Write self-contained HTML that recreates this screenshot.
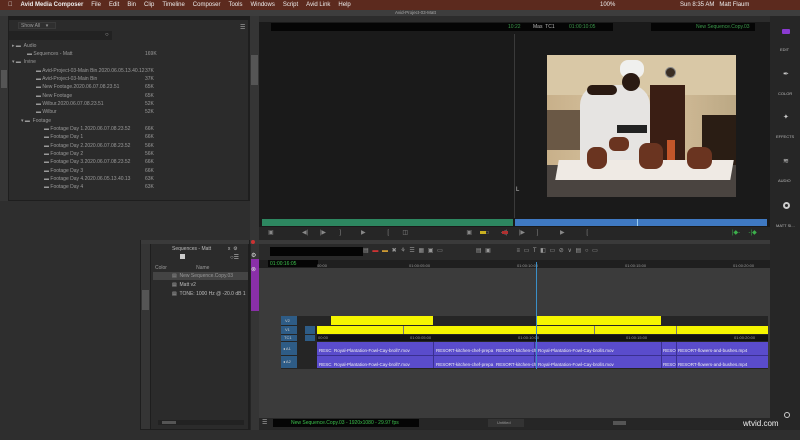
<!DOCTYPE html>
<html><head><meta charset="utf-8"><style>
*{margin:0;padding:0;box-sizing:border-box}
body{width:800px;height:440px;overflow:hidden;background:#2e2e2e;font-family:"Liberation Sans",sans-serif;position:relative;color:#aaa}
.a{position:absolute}
.t{position:absolute;font-size:5px;white-space:nowrap;color:#9a9a9a}
.menu span{margin-right:8px}
</style></head><body>
<!-- menubar -->
<div class="a menu" style="left:0;top:0;width:800px;height:10px;background:#5c2a1e;color:#eee;font-size:6px;line-height:10px;padding-left:8px;white-space:nowrap">
<span style="font-weight:bold">&#63743;</span><span style="font-weight:bold">Avid Media Composer</span><span>File</span><span>Edit</span><span>Bin</span><span>Clip</span><span>Timeline</span><span>Composer</span><span>Tools</span><span>Windows</span><span>Script</span><span>Avid Link</span><span>Help</span>
<span class="a" style="left:680px;top:0">Sun 8:35 AM &nbsp; Matt Flaum</span>
<span class="a" style="left:600px;top:0">100%</span>
</div>
<div class="a" style="left:0;top:10px;width:800px;height:6px;background:#3d3d3d"></div>
<div class="t" style="left:395px;top:10px;font-size:4.5px;color:#aaa">Avid-Project-03-Matt</div>

<!-- bin panel -->
<div class="a" style="left:0;top:16px;width:250px;height:185px;background:#1e1e1e"></div>
<div class="a" style="left:0;top:16px;width:8px;height:185px;background:#353535"></div>
<div class="a" style="left:1px;top:70px;width:6px;height:18px;background:#555"></div>
<div class="a" style="left:9px;top:20px;width:239px;height:180px;background:#2b2b2b"></div>
<div class="a" style="left:18px;top:22px;width:38px;height:7px;background:#2f2f2f;border:1px solid #3a3a3a"></div>
<div class="t" style="left:21px;top:23px">Show All &nbsp; &nbsp;&#9662;</div>
<div class="a" style="left:9px;top:31px;width:103px;height:9px;background:#222"></div>
<div class="t" style="left:105px;top:32px;font-size:6px;color:#aaa">&#9675;</div>
<div class="t" style="left:240px;top:24px;font-size:6px;color:#aaa">&#9776;</div>
<div style="position:absolute;left:9px;top:43px;width:239px">
<div class="t" style="left:3px;top:0">&#9656; &#9644; &nbsp;Audio</div>
<div class="t" style="left:18px;top:8px">&#9644; Sequences - Matt</div><div class="t" style="left:136px;top:8px">169K</div>
<div class="t" style="left:3px;top:16px">&#9662; &#9644; &nbsp;Irvine</div>
<div class="t" style="left:27px;top:25px">&#9644; Avid-Project-03-Main Bin.2020.06.05.13.40.12</div><div class="t" style="left:136px;top:25px">37K</div>
<div class="t" style="left:27px;top:33px">&#9644; Avid-Project-03-Main Bin</div><div class="t" style="left:136px;top:33px">37K</div>
<div class="t" style="left:27px;top:41px">&#9644; New Footage.2020.06.07.08.23.51</div><div class="t" style="left:136px;top:41px">65K</div>
<div class="t" style="left:27px;top:50px">&#9644; New Footage</div><div class="t" style="left:136px;top:50px">65K</div>
<div class="t" style="left:27px;top:58px">&#9644; Wilbur.2020.06.07.08.23.51</div><div class="t" style="left:136px;top:58px">52K</div>
<div class="t" style="left:27px;top:66px">&#9644; Wilbur</div><div class="t" style="left:136px;top:66px">52K</div>
<div class="t" style="left:12px;top:75px">&#9662; &#9644; &nbsp;Footage</div>
<div class="t" style="left:35px;top:83px">&#9644; Footage Day 1.2020.06.07.08.23.52</div><div class="t" style="left:136px;top:83px">66K</div>
<div class="t" style="left:35px;top:91px">&#9644; Footage Day 1</div><div class="t" style="left:136px;top:91px">66K</div>
<div class="t" style="left:35px;top:100px">&#9644; Footage Day 2.2020.06.07.08.23.52</div><div class="t" style="left:136px;top:100px">56K</div>
<div class="t" style="left:35px;top:108px">&#9644; Footage Day 2</div><div class="t" style="left:136px;top:108px">56K</div>
<div class="t" style="left:35px;top:116px">&#9644; Footage Day 3.2020.06.07.08.23.52</div><div class="t" style="left:136px;top:116px">66K</div>
<div class="t" style="left:35px;top:125px">&#9644; Footage Day 3</div><div class="t" style="left:136px;top:125px">66K</div>
<div class="t" style="left:35px;top:133px">&#9644; Footage Day 4.2020.06.05.13.40.13</div><div class="t" style="left:136px;top:133px">63K</div>
<div class="t" style="left:35px;top:141px">&#9644; Footage Day 4</div><div class="t" style="left:136px;top:141px">63K</div>
</div>

<!-- composer -->
<div class="a" style="left:250px;top:16px;width:520px;height:224px;background:#1a1a1a"></div>
<div class="a" style="left:250px;top:16px;width:9px;height:224px;background:#353535"></div>
<div class="a" style="left:251px;top:55px;width:7px;height:30px;background:#555"></div>
<div class="a" style="left:259px;top:16px;width:511px;height:6px;background:#2c2c2c"></div>
<div class="a" style="left:271px;top:23px;width:148px;height:8px;background:#050505"></div>
<div class="a" style="left:416px;top:23px;width:197px;height:8px;background:#050505"></div>
<div class="t" style="left:508px;top:24px;color:#3c9a4c">10:22</div>
<div class="t" style="left:533px;top:24px;color:#bbb">Mas &nbsp;TC1</div>
<div class="t" style="left:569px;top:24px;color:#3c9a4c">01:00:10:05</div>
<div class="a" style="left:651px;top:23px;width:104px;height:8px;background:#050505"></div>
<div class="t" style="left:696px;top:24px;color:#3c9a4c">New Sequence.Copy.03</div>
<div class="a" style="left:514px;top:34px;width:1px;height:184px;background:#3a3a3a"></div>
<div class="t" style="left:516px;top:187px;color:#ccc;font-size:6px">L</div>
<!-- video -->
<div class="a" style="left:547px;top:55px;width:189px;height:142px;overflow:hidden;background:linear-gradient(90deg,#c8b08a,#d6c3a0 40%,#cfb995 70%,#bba884)">
 <div class="a" style="left:0;top:0;width:189px;height:40px;background:#d9c8a6"></div>
 <div class="a" style="left:0;top:55px;width:40px;height:40px;background:#6a5845"></div>
 <div class="a" style="left:103px;top:30px;width:35px;height:85px;background:#3a1e14"></div>
 <div class="a" style="left:118px;top:12px;width:11px;height:11px;border-radius:50%;background:#3a2e24;border:1px solid #888"></div>
 <div class="a" style="left:155px;top:60px;width:34px;height:60px;background:#2a1d14"></div>
 <div class="a" style="left:33px;top:30px;width:70px;height:75px;border-radius:20px 20px 0 0;background:#e6e4e2"></div>
 <div class="a" style="left:73px;top:5px;width:24px;height:18px;border-radius:8px;background:#f0f0ee"></div>
 <div class="a" style="left:75px;top:18px;width:18px;height:18px;border-radius:50%;background:#2a1a12"></div>
 <div class="a" style="left:40px;top:30px;width:30px;height:10px;background:#2a1a12;border-radius:5px"></div>
 <div class="a" style="left:70px;top:70px;width:30px;height:8px;background:#222"></div>
 <div class="a" style="left:120px;top:85px;width:8px;height:25px;background:#c4562a"></div>
 <div class="a" style="left:-10px;top:110px;width:210px;height:40px;background:#4a4440"></div>
 <div class="a" style="left:10px;top:105px;width:175px;height:20px;background:#efeae4;transform:skewX(-10deg)"></div>
 <div class="a" style="left:40px;top:92px;width:20px;height:22px;border-radius:8px;background:#6a3420"></div>
 <div class="a" style="left:62px;top:82px;width:20px;height:14px;border-radius:6px;background:#6a3420"></div>
 <div class="a" style="left:92px;top:88px;width:24px;height:26px;border-radius:8px;background:#6a3420"></div>
 <div class="a" style="left:140px;top:92px;width:25px;height:22px;border-radius:8px;background:#6a3420"></div>
</div>
<div class="a" style="left:262px;top:219px;width:251px;height:7px;background:#2d8760"></div>
<div class="a" style="left:515px;top:219px;width:252px;height:7px;background:#3f79c2"></div>
<div class="a" style="left:637px;top:219px;width:1px;height:7px;background:#9ce"></div>
<div class="a" style="left:259px;top:227px;width:511px;height:13px;background:#262626"></div>
<div class="t" style="left:268px;top:229px;font-size:6px;color:#888;letter-spacing:0">&#9635; &nbsp; &nbsp; &nbsp; &nbsp; &nbsp; &nbsp; &nbsp; &nbsp; &#9664;| &nbsp; &nbsp; &nbsp; |&#9654; &nbsp; &nbsp; &nbsp; &nbsp;] &nbsp; &nbsp; &nbsp; &nbsp; &nbsp; &nbsp;&#9654; &nbsp; &nbsp; &nbsp; &nbsp; &nbsp; &nbsp; [ &nbsp; &nbsp; &nbsp; &nbsp;&#9707; &nbsp; &nbsp; &nbsp; &nbsp; &nbsp; &nbsp; &nbsp; &nbsp; &nbsp; &nbsp; &nbsp; &nbsp; &nbsp; &nbsp; &nbsp; &nbsp; &nbsp; &#9635; &nbsp; &nbsp; &nbsp; &#9645; &nbsp; &nbsp; &nbsp; &#9664;| &nbsp; &nbsp; &nbsp; |&#9654; &nbsp; &nbsp; &nbsp; ] &nbsp; &nbsp; &nbsp; &nbsp; &nbsp; &nbsp; &#9654; &nbsp; &nbsp; &nbsp; &nbsp; &nbsp; &nbsp; [</div>
<div class="a" style="left:480px;top:231px;width:6px;height:3px;background:#c9b020"></div>
<div class="a" style="left:502px;top:231px;width:6px;height:3px;background:#b03030"></div>
<div class="t" style="left:732px;top:229px;font-size:6px;color:#3cb04c">|&#9670;- &nbsp; &nbsp; -|&#9670;</div>

<!-- right sidebar -->
<div class="a" style="left:770px;top:16px;width:30px;height:414px;background:#262626"></div>
<div class="a" style="left:782px;top:29px;width:8px;height:5px;background:#8a3ad0;border-radius:1px"></div>
<div class="t" style="left:780px;top:47px;font-size:4px;color:#bbb">EDIT</div>
<div class="t" style="left:783px;top:70px;font-size:7px;color:#ccc">&#10002;</div>
<div class="t" style="left:778px;top:91px;font-size:4px;color:#bbb">COLOR</div>
<div class="t" style="left:783px;top:113px;font-size:7px;color:#ccc">&#10022;</div>
<div class="t" style="left:776px;top:134px;font-size:4px;color:#bbb">EFFECTS</div>
<div class="t" style="left:783px;top:157px;font-size:7px;color:#ccc">&#8779;</div>
<div class="t" style="left:778px;top:178px;font-size:4px;color:#bbb">AUDIO</div>
<div class="a" style="left:783px;top:202px;width:7px;height:7px;border-radius:50%;border:2px solid #ccc"></div>
<div class="t" style="left:776px;top:223px;font-size:4px;color:#bbb">MATT SI...</div>
<div class="a" style="left:784px;top:412px;width:6px;height:6px;border-radius:50%;border:1.5px solid #ccc"></div>

<!-- sequences bin -->
<div class="a" style="left:140px;top:240px;width:110px;height:190px;background:#1e1e1e"></div>
<div class="a" style="left:141px;top:240px;width:108px;height:4px;background:#3a3a3a"></div>
<div class="a" style="left:141px;top:244px;width:9px;height:185px;background:#353535"></div>
<div class="a" style="left:142px;top:290px;width:7px;height:20px;background:#555"></div>
<div class="a" style="left:151px;top:244px;width:97px;height:185px;background:#2b2b2b"></div>
<div class="t" style="left:172px;top:246px;color:#bbb">Sequences - Matt &nbsp; &nbsp; &nbsp; &nbsp; &nbsp; &nbsp;x &nbsp;&#9881;</div>
<div class="a" style="left:180px;top:254px;width:5px;height:5px;background:#ccc"></div>
<div class="t" style="left:230px;top:254px;color:#bbb;font-size:6px">&#9675;&#9776;</div>
<div class="t" style="left:155px;top:265px">Color &nbsp; &nbsp; &nbsp; &nbsp; &nbsp; &nbsp; &nbsp; &nbsp; &nbsp; &nbsp; Name</div>
<div class="a" style="left:153px;top:272px;width:95px;height:8px;background:#444"></div>
<div class="t" style="left:172px;top:273px;color:#999">&#9636; &nbsp;New Sequence.Copy.03</div>
<div class="t" style="left:172px;top:282px;color:#bbb">&#9636; &nbsp;Matt v2</div>
<div class="t" style="left:172px;top:291px;color:#bbb">&#9636; &nbsp;TONE: 1000 Hz @ -20.0 dB 1</div>
<div class="a" style="left:158px;top:420px;width:86px;height:5px;background:#222"></div>
<div class="a" style="left:162px;top:421px;width:14px;height:3px;background:#555"></div>

<!-- timeline -->
<div class="a" style="left:250px;top:240px;width:520px;height:190px;background:#252525"></div>
<div class="a" style="left:250px;top:240px;width:520px;height:4px;background:#3a3a3a"></div>
<div class="a" style="left:251px;top:240px;width:4px;height:4px;background:#c33;border-radius:50%"></div>
<div class="a" style="left:251px;top:244px;width:8px;height:186px;background:#353535"></div>
<div class="a" style="left:251px;top:259px;width:8px;height:52px;background:#8a2fa8"></div>
<div class="t" style="left:251px;top:252px;font-size:6px;color:#ddd">&#9881;</div>
<div class="t" style="left:251px;top:266px;font-size:6px;color:#ddd">&#8855;</div>
<div class="a" style="left:259px;top:244px;width:511px;height:16px;background:#2a2a2a"></div>
<div class="a" style="left:270px;top:247px;width:93px;height:9px;background:#050505"></div>
<div class="t" style="left:363px;top:247px;font-size:6px;color:#999;word-spacing:2px">&#9636; <span style="color:#c33">&#9644;</span> <span style="color:#c93">&#9644;</span> &#10006; &#9880; &#9776; &#9638; &#9635; &#9645; &nbsp; &nbsp; &nbsp; &nbsp; &#9636; &#9635; &nbsp; &nbsp; &nbsp; &#8801; &#9645; T &#9703; &#9645; &#8856; &#8744; &#9636; &#9675; &#9645;</div>
<div class="a" style="left:259px;top:260px;width:511px;height:8px;background:#1f1f1f"></div>
<div class="a" style="left:268px;top:260px;width:50px;height:7px;background:#050505"></div>
<div class="t" style="left:270px;top:261px;color:#3cc04c">01:00:16:05</div>
<div class="t" style="left:317px;top:263px;font-size:4px">00:00</div>
<div class="t" style="left:409px;top:263px;font-size:4px">01:00:05:00</div>
<div class="t" style="left:517px;top:263px;font-size:4px">01:00:10:00</div>
<div class="t" style="left:625px;top:263px;font-size:4px">01:00:15:00</div>
<div class="t" style="left:733px;top:263px;font-size:4px">01:00:20:00</div>
<div class="a" style="left:259px;top:268px;width:511px;height:152px;background:#3b3b3b"></div>
<!-- track rows bg -->
<div class="a" style="left:281px;top:316px;width:487px;height:53px;background:#252525"></div>
<!-- headers -->
<div class="a" style="left:281px;top:316px;width:16px;height:9px;background:#2e5c86"></div>
<div class="a" style="left:281px;top:326px;width:16px;height:8px;background:#2e5c86"></div>
<div class="a" style="left:281px;top:335px;width:16px;height:6px;background:#2e5c86"></div>
<div class="a" style="left:281px;top:342px;width:16px;height:13px;background:#2e5c86"></div>
<div class="a" style="left:281px;top:356px;width:16px;height:12px;background:#2e5c86"></div>
<div class="a" style="left:305px;top:326px;width:10px;height:8px;background:#2e5c86"></div>
<div class="a" style="left:305px;top:335px;width:10px;height:6px;background:#2e5c86"></div>
<div class="t" style="left:285px;top:318px;font-size:4px;color:#ccc">V2</div>
<div class="t" style="left:285px;top:327px;font-size:4px;color:#ccc">V1</div>
<div class="t" style="left:284px;top:335px;font-size:4px;color:#ccc">TC1</div>
<div class="t" style="left:283px;top:346px;font-size:4px;color:#ccc">&#9666; A1</div>
<div class="t" style="left:283px;top:359px;font-size:4px;color:#ccc">&#9666; A2</div>
<!-- V2 -->
<div class="a" style="left:331px;top:316px;width:102px;height:9px;background:#f5f500"></div>
<div class="a" style="left:537px;top:316px;width:124px;height:9px;background:#f5f500"></div>
<!-- V1 -->
<div class="a" style="left:317px;top:326px;width:451px;height:8px;background:#f5f500"></div>
<div class="a" style="left:403px;top:326px;width:1px;height:8px;background:#777"></div>
<div class="a" style="left:594px;top:326px;width:1px;height:8px;background:#777"></div>
<div class="a" style="left:676px;top:326px;width:1px;height:8px;background:#777"></div>
<!-- TC -->
<div class="a" style="left:317px;top:335px;width:451px;height:6px;background:#111"></div>
<div class="t" style="left:318px;top:335px;font-size:4px">00:00</div>
<div class="t" style="left:410px;top:335px;font-size:4px">01:00:05:00</div>
<div class="t" style="left:518px;top:335px;font-size:4px">01:00:10:00</div>
<div class="t" style="left:626px;top:335px;font-size:4px">01:00:15:00</div>
<div class="t" style="left:734px;top:335px;font-size:4px">01:00:20:00</div>
<!-- audio -->
<div class="a" style="left:317px;top:342px;width:451px;height:13px;background:#5a4ccc"></div>
<div class="a" style="left:317px;top:356px;width:451px;height:12px;background:#5a4ccc"></div>
<div class="a" style="left:317px;top:355px;width:451px;height:1px;background:#3a3090"></div>
<div class="a" style="left:433px;top:342px;width:1px;height:26px;background:#3a3090"></div>
<div class="a" style="left:534px;top:342px;width:1px;height:26px;background:#3a3090"></div>
<div class="a" style="left:661px;top:342px;width:1px;height:26px;background:#3a3090"></div>
<div class="a" style="left:676px;top:342px;width:1px;height:26px;background:#3a3090"></div>
<div class="t" style="left:319px;top:348px;font-size:4.5px;color:#eee">RESC &nbsp;Royal-Plantation-Fowl-Cay-broll7.mov</div>
<div class="t" style="left:436px;top:348px;font-size:4.5px;color:#eee">RESORT-kitchen-chef-prepa</div>
<div class="t" style="left:496px;top:348px;font-size:4.5px;color:#eee">RESORT-kitchen-ch</div>
<div class="t" style="left:538px;top:348px;font-size:4.5px;color:#eee">Royal-Plantation-Fowl-Cay-broll4.mov</div>
<div class="t" style="left:663px;top:348px;font-size:4.5px;color:#eee">RESO</div>
<div class="t" style="left:678px;top:348px;font-size:4.5px;color:#eee">RESORT-flowers-and-bushes.mp4</div>
<div class="t" style="left:319px;top:362px;font-size:4.5px;color:#eee">RESC &nbsp;Royal-Plantation-Fowl-Cay-broll7.mov</div>
<div class="t" style="left:436px;top:362px;font-size:4.5px;color:#eee">RESORT-kitchen-chef-prepa</div>
<div class="t" style="left:496px;top:362px;font-size:4.5px;color:#eee">RESORT-kitchen-ch</div>
<div class="t" style="left:538px;top:362px;font-size:4.5px;color:#eee">Royal-Plantation-Fowl-Cay-broll4.mov</div>
<div class="t" style="left:663px;top:362px;font-size:4.5px;color:#eee">RESO</div>
<div class="t" style="left:678px;top:362px;font-size:4.5px;color:#eee">RESORT-flowers-and-bushes.mp4</div>
<!-- playhead -->
<div class="a" style="left:536px;top:262px;width:1px;height:107px;background:#3a8fc8"></div>
<!-- bottom bar -->
<div class="a" style="left:259px;top:418px;width:511px;height:11px;background:#262626"></div>
<div class="a" style="left:273px;top:419px;width:146px;height:8px;background:#050505"></div>
<div class="t" style="left:291px;top:420px;color:#3cc04c">New Sequence.Copy.03 - 1920x1080 - 29.97 fps</div>
<div class="t" style="left:262px;top:419px;font-size:6px;color:#aaa">&#9776;</div>
<div class="a" style="left:488px;top:419px;width:36px;height:8px;background:#333"></div>
<div class="t" style="left:497px;top:420px;font-size:4px">Untitled</div>
<div class="a" style="left:613px;top:421px;width:13px;height:4px;background:#555"></div>
<!-- bottom -->
<div class="a" style="left:0;top:430px;width:800px;height:10px;background:#2e2e2e"></div>
<div class="t" style="left:743px;top:419px;font-size:8px;color:#eee">wtvid.com</div>
</body></html>
